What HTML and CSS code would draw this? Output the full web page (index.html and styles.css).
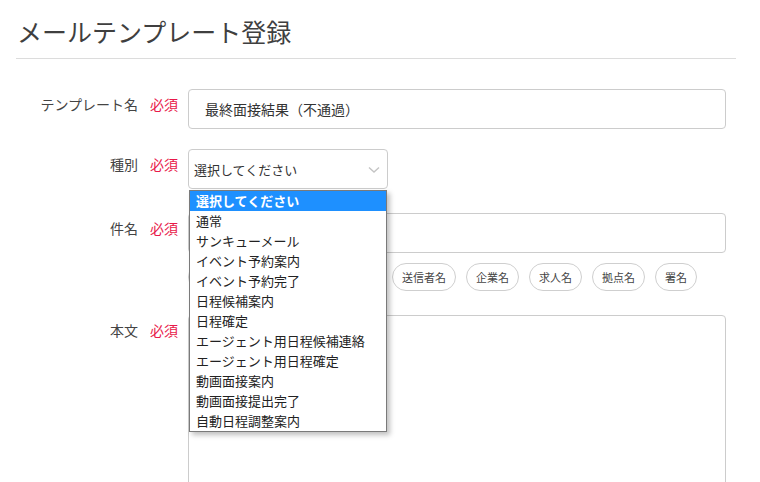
FILE: index.html
```html
<!DOCTYPE html>
<html lang="ja">
<head>
<meta charset="utf-8">
<link rel="stylesheet" href="styles.css">
</head>
<body>
<div class="page">
  <h1 class="title">メールテンプレート登録</h1>
  <form class="form">
    <div class="row">
      <div class="label"><span>テンプレート名</span><span class="req">必須</span></div>
      <div class="field"><div class="input name-input">最終面接結果（不通過）</div></div>
    </div>
    <div class="row">
      <div class="label"><span>種別</span><span class="req">必須</span></div>
      <div class="field">
        <div class="select-wrap">
          <div class="select">
            <span>選択してください</span>
            <svg class="chev" width="12" height="8" viewBox="0 0 12 8"><path d="M1 1.5 L6 6 L11 1.5" fill="none" stroke="#c4c4c4" stroke-width="1.4"/></svg>
          </div>
          <ul class="options">
            <li class="active">選択してください</li>
            <li>通常</li>
            <li>サンキューメール</li>
            <li>イベント予約案内</li>
            <li>イベント予約完了</li>
            <li>日程候補案内</li>
            <li>日程確定</li>
            <li>エージェント用日程候補連絡</li>
            <li>エージェント用日程確定</li>
            <li>動画面接案内</li>
            <li>動画面接提出完了</li>
            <li>自動日程調整案内</li>
          </ul>
        </div>
      </div>
    </div>
    <div class="row">
      <div class="label"><span>件名</span><span class="req">必須</span></div>
      <div class="field">
        <div class="input"></div>
        <div class="tags">
          <span class="tag">応募者名</span>
          <span class="tag">面接日時・面接場所</span>
          <span class="tag">送信者名</span>
          <span class="tag">企業名</span>
          <span class="tag">求人名</span>
          <span class="tag">拠点名</span>
          <span class="tag">署名</span>
        </div>
      </div>
    </div>
    <div class="row">
      <div class="label"><span>本文</span><span class="req">必須</span></div>
      <div class="field"><div class="textarea"></div></div>
    </div>
  </form>
</div>
</body>
</html>
```
FILE: styles.css
```css
* { box-sizing: border-box; }
html, body { margin: 0; padding: 0; background: #fff; }
body {
  font-family: "Noto Sans CJK JP", "Noto Sans", sans-serif;
  color: #444;
  overflow: hidden;
}
.page {
  width: 720px;
  margin-left: 16px;
  padding-top: 13px;
}
.title {
  margin: 0;
  padding-left: 1px;
  font-size: 25px;
  font-weight: 400;
  line-height: 36px;
  color: #3f3f3f;
  padding-bottom: 9px;
  border-bottom: 1px solid #dcdcdc;
}
.form {
  padding-top: 30px;
  padding-right: 10px;
}
.row {
  display: flex;
  margin-bottom: 20px;
}
.row:nth-child(2) { margin-bottom: 24px; }
.row:nth-child(3) { margin-bottom: 24px; }
.label {
  width: 172px;
  flex: none;
  display: flex;
  justify-content: flex-end;
  gap: 12px;
  padding-top: 5px;
  padding-right: 10px;
  font-size: 14px;
  line-height: 20px;
  color: #444;
}
.req { color: #e8194a; width: 28px; text-align: left; }
.field { flex: 1; min-width: 0; }
.input {
  height: 40px;
  border: 1px solid #cccccc;
  border-radius: 4px;
  background: #fff;
}
.name-input {
  padding-left: 16px;
  font-size: 14px;
  line-height: 38px;
  color: #333;
}
.select-wrap { position: relative; width: 200px; }
.select {
  height: 40px;
  border: 1px solid #cccccc;
  border-radius: 4px;
  display: flex;
  align-items: center;
  justify-content: space-between;
  padding: 0 7px 0 5px;
  font-size: 13px;
  color: #333;
}
.select span { padding-top: 1px; }
.chev { margin-top: 1px; }
.options {
  position: absolute;
  left: 1px;
  top: 41px;
  width: 198px;
  margin: 0;
  padding: 0;
  list-style: none;
  background: #fff;
  border: 1px solid #7a7a7a;
  box-shadow: 3px 3px 5px rgba(0,0,0,0.25);
  z-index: 5;
}
.options li {
  height: 20px;
  line-height: 20px;
  font-size: 13px;
  padding-left: 6px;
  color: #222;
}
.options li.active {
  background: #1e90ff;
  color: #fff;
  font-weight: 700;
}
.tags {
  display: flex;
  flex-wrap: wrap;
  gap: 10px;
  margin-top: 10px;
}
.tag {
  height: 28px;
  padding: 0 9px;
  border: 1px solid #cfcfcf;
  border-radius: 14px;
  font-size: 11px;
  line-height: 26px;
  color: #444;
  background: #fff;
}
.tags .tag:nth-child(3) { margin-left: 1px; }
.textarea {
  height: 200px;
  border: 1px solid #cccccc;
  border-radius: 4px;
}
```
